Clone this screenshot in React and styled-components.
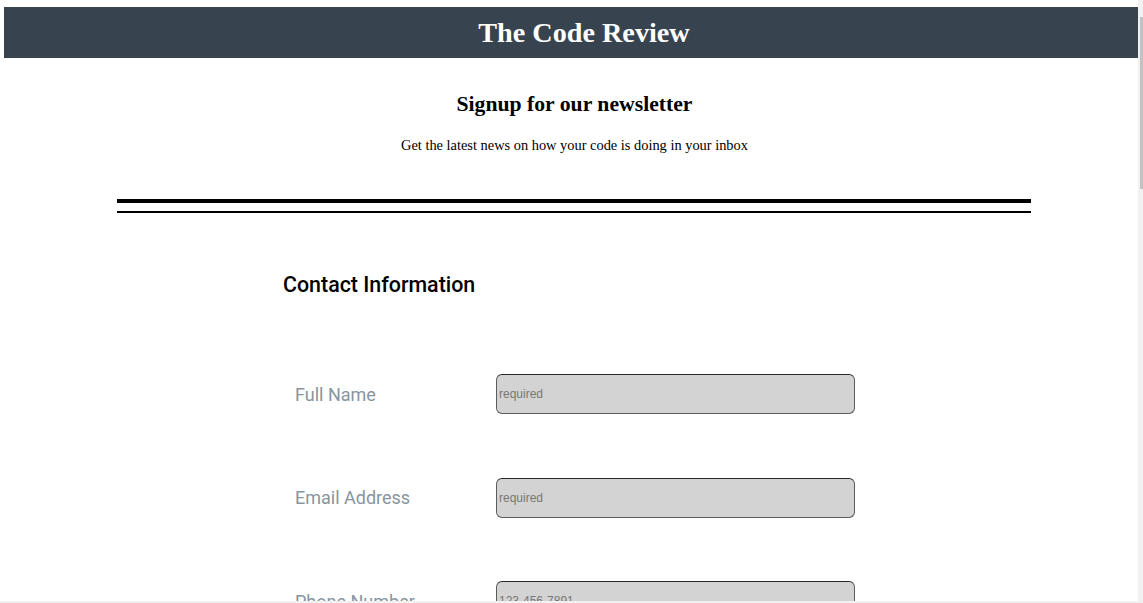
import React from 'react';
import styled, { createGlobalStyle } from 'styled-components';

const GlobalStyle = createGlobalStyle`
  html, body {
    margin: 0;
    padding: 0;
    background: #fff;
    overflow: hidden;
  }
  body {
    font-family: "Liberation Serif", "Times New Roman", serif;
  }
`;

const Page = styled.div`
  padding: 7px 0 0 4px;
  width: 1134px;
`;

const Header = styled.header`
  height: 51px;
  background-color: #37444f;
  display: flex;
  align-items: center;
  justify-content: center;
  padding-left: 26px;
  h1 {
    margin: 0;
    color: #fff;
    font-size: 28.2px;
    font-weight: bold;
    line-height: 32px;
  }
`;

const Intro = styled.section`
  padding-left: 7px;
  padding-top: 34px;
  text-align: center;
  h2 {
    margin: 0;
    font-size: 21.7px;
    line-height: 25px;
  }
  p {
    margin: 20px 0 0;
    font-size: 14.4px;
    line-height: 16px;
  }
`;

const Divider = styled.div`
  width: 914px;
  margin: 46px 0 0 113px;
  display: flex;
  flex-direction: column;
  gap: 8px;
`;

const Rule = styled.div`
  height: ${p => p.$thick}px;
  background: #000;
`;

const Form = styled.form`
  margin: 60px 0 0 279px;
  font-family: Roboto, "Liberation Sans", sans-serif;
`;

const Legend = styled.h3`
  margin: 0;
  font-size: 21.4px;
  font-weight: 500;
  line-height: 24px;
  color: #000;
`;

const Fields = styled.div`
  margin-top: 77px;
  display: grid;
  grid-template-columns: 201px 359px;
  row-gap: 63.5px;
  align-items: center;
  padding-left: 12px;
`;

const Label = styled.label`
  font-size: 18px;
  color: #8795a0;
`;

const Input = styled.input`
  box-sizing: border-box;
  height: 40px;
  width: 359px;
  margin: 0;
  padding: 0 0 0 2px;
  background: #d3d3d3;
  border: 1px solid #5c5c5c;
  border-top-color: #2a2a2a;
  border-radius: 6px;
  font-family: "Liberation Sans", Arial, sans-serif;
  font-size: 12px;
  &::placeholder {
    color: #777;
  }
`;

const Scrollbar = styled.div`
  position: fixed;
  top: 0;
  right: 0;
  width: 5px;
  height: 603px;
  background: #f1f1f1;
  &::after {
    content: '';
    position: absolute;
    top: 17px;
    left: 2px;
    width: 3px;
    height: 172px;
    background: #c1c1c1;
  }
`;

const BottomBar = styled.div`
  position: fixed;
  left: 0;
  bottom: 0;
  width: 1143px;
  height: 2px;
  background: #f1f1f1;
`;

const fields = [
  { id: 'name', label: 'Full Name', placeholder: 'required' },
  { id: 'email', label: 'Email Address', placeholder: 'required' },
  { id: 'phone', label: 'Phone Number', placeholder: '123-456-7891' },
];

export default function App() {
  return (
    <>
      <GlobalStyle />
      <Page>
        <Header>
          <h1>The Code Review</h1>
        </Header>
        <Intro>
          <h2>Signup for our newsletter</h2>
          <p>Get the latest news on how your code is doing in your inbox</p>
        </Intro>
        <Divider>
          <Rule $thick={4} />
          <Rule $thick={2} />
        </Divider>
        <Form>
          <Legend>Contact Information</Legend>
          <Fields>
            {fields.map(f => (
              <React.Fragment key={f.id}>
                <Label htmlFor={f.id}>{f.label}</Label>
                <Input id={f.id} placeholder={f.placeholder} />
              </React.Fragment>
            ))}
          </Fields>
        </Form>
      </Page>
      <Scrollbar />
      <BottomBar />
    </>
  );
}
